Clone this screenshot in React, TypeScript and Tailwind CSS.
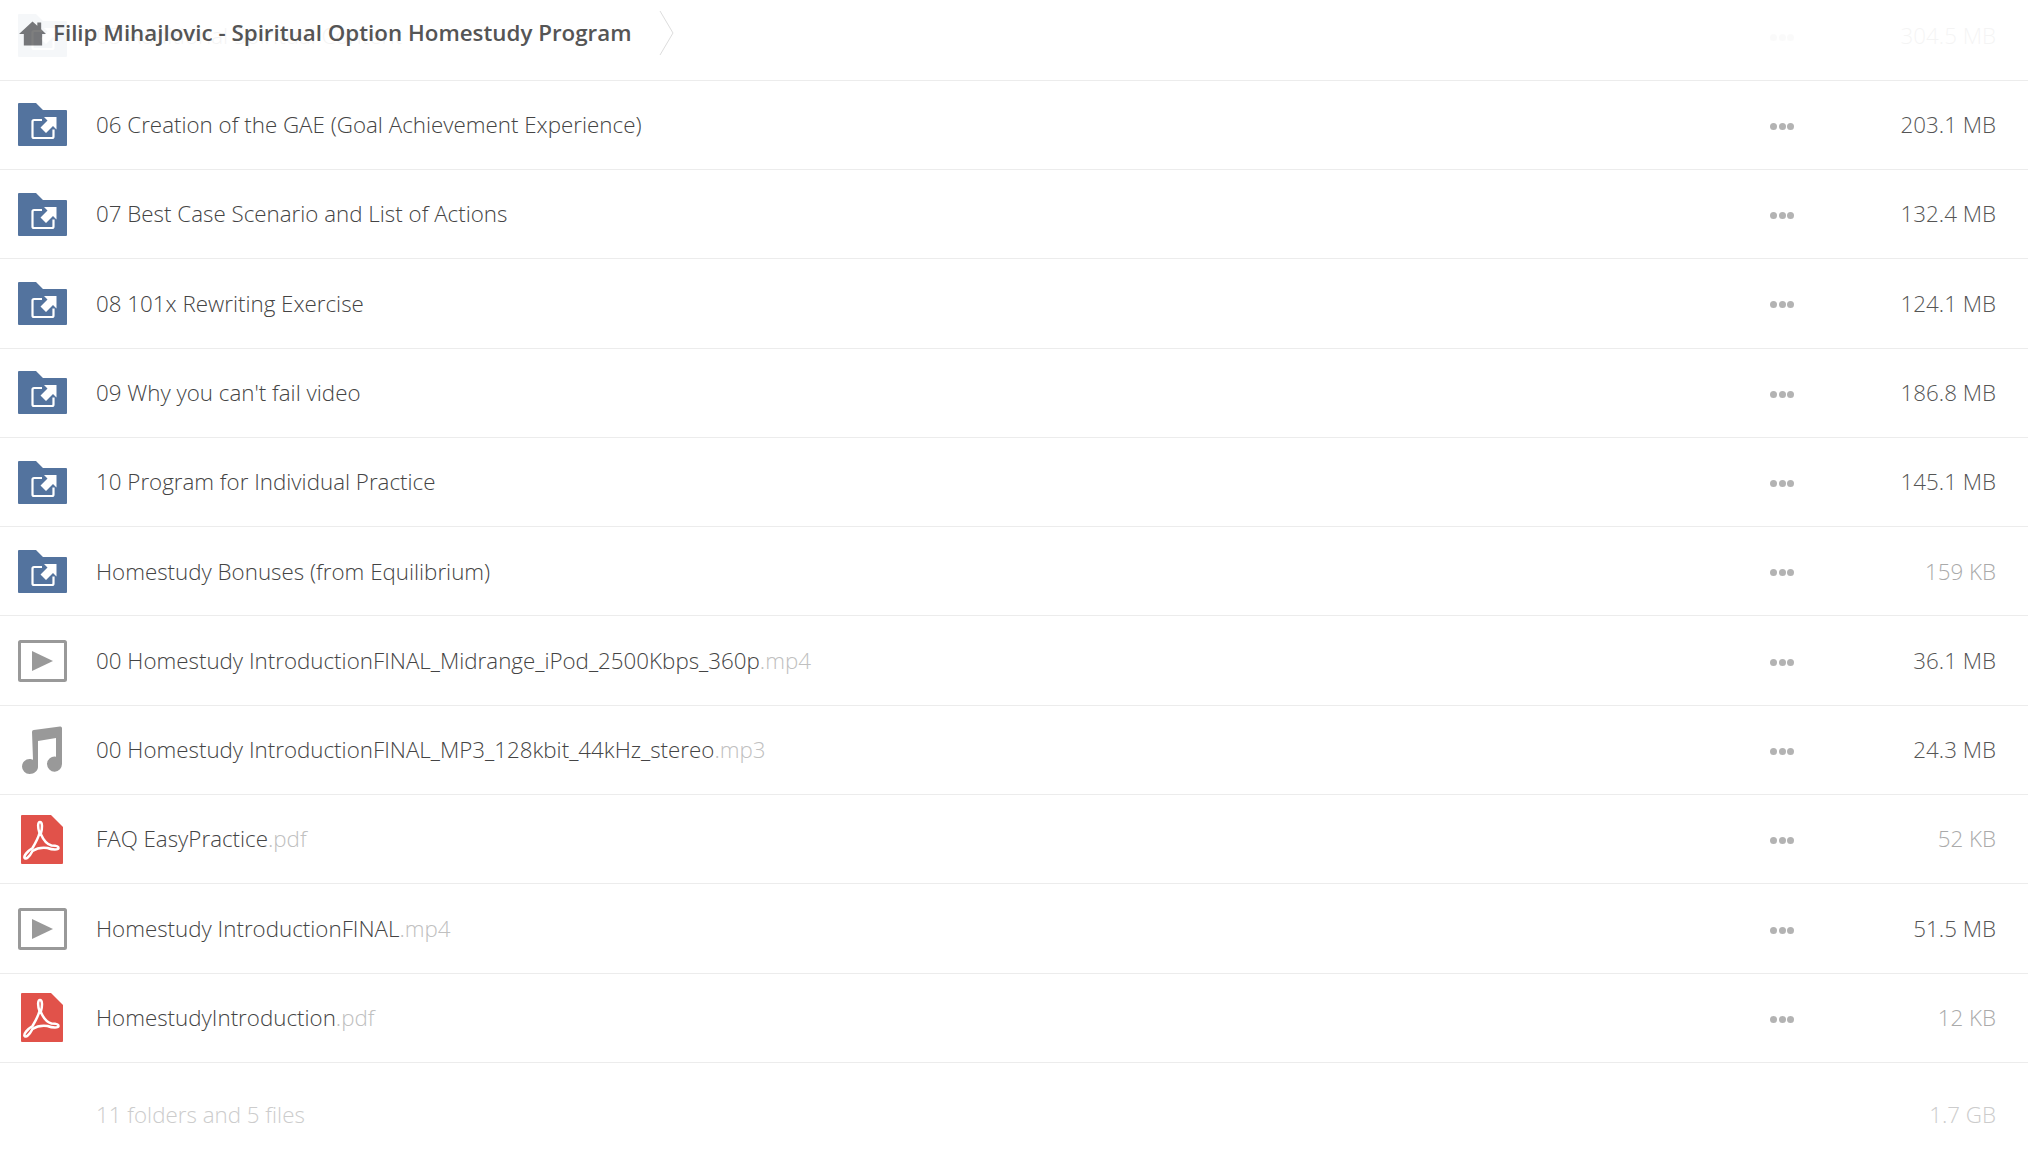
type FileKind = 'folder' | 'video' | 'audio' | 'pdf';

interface Item {
  name: string;
  ext?: string;
  size: string;
  kind: FileKind;
  small?: boolean;
}

const items: Item[] = [
  { name: '06 Creation of the GAE (Goal Achievement Experience)', size: '203.1 MB', kind: 'folder' },
  { name: '07 Best Case Scenario and List of Actions', size: '132.4 MB', kind: 'folder' },
  { name: '08 101x Rewriting Exercise', size: '124.1 MB', kind: 'folder' },
  { name: "09 Why you can't fail video", size: '186.8 MB', kind: 'folder' },
  { name: '10 Program for Individual Practice', size: '145.1 MB', kind: 'folder' },
  { name: 'Homestudy Bonuses (from Equilibrium)', size: '159 KB', kind: 'folder', small: true },
  { name: '00 Homestudy IntroductionFINAL_Midrange_iPod_2500Kbps_360p', ext: '.mp4', size: '36.1 MB', kind: 'video' },
  { name: '00 Homestudy IntroductionFINAL_MP3_128kbit_44kHz_stereo', ext: '.mp3', size: '24.3 MB', kind: 'audio' },
  { name: 'FAQ EasyPractice', ext: '.pdf', size: '52 KB', kind: 'pdf', small: true },
  { name: 'Homestudy IntroductionFINAL', ext: '.mp4', size: '51.5 MB', kind: 'video' },
  { name: 'HomestudyIntroduction', ext: '.pdf', size: '12 KB', kind: 'pdf', small: true },
];

const FolderIcon = () => (
  <svg width="49" height="43" viewBox="0 0 49 43">
    <path d="M0 1a1 1 0 0 1 1-1h17l7 7h23a1 1 0 0 1 1 1v34a1 1 0 0 1-1 1H1a1 1 0 0 1-1-1z" fill="#53739e" />
    <path d="M24 17h-8a1.500 1.500 0 0 0-1.500 1.500v15a1.500 1.500 0 0 0 1.500 1.500h18a1.500 1.500 0 0 0 1.500-1.500v-7" fill="none" stroke="#fff" strokeWidth="2.200" />
    <path d="M22.500 24.500l7-7-3.500-3.500h12.500v12.500l-3.500-3.500-7 7z" fill="#fff" />
  </svg>
);

const VideoIcon = () => (
  <svg width="49" height="42" viewBox="0 0 49 42">
    <rect x="1.500" y="1.500" width="46" height="39" rx="1" fill="none" stroke="#999" strokeWidth="3" />
    <path d="M14 11l21 10-21 10z" fill="#999" />
  </svg>
);

const AudioIcon = () => (
  <svg width="40" height="48" viewBox="0 0 40 48">
    <path d="M10 6a2 2 0 0 1 1.800-2L38 .5A1.700 1.700 0 0 1 40 2v35.500a7.500 8 0 0 1-15 .5 7.500 7.500 0 0 1 9-7.300V12l-18 3v26c0 3.500-3.500 7-8.500 7a7.500 7.500 0 0 1 0-15c1.200 0 2.600.2 3.500.7z" fill="#999" />
  </svg>
);

const PdfIcon = () => (
  <svg width="42" height="49" viewBox="0 0 42 49">
    <path d="M1 0h29l12 12v36a1 1 0 0 1-1 1H1a1 1 0 0 1-1-1V1a1 1 0 0 1 1-1z" fill="#e1524a" />
    <path d="M19 7c2.500 0 2.500 6 .8 12 3 7 6.700 10.500 10.700 11.500 4 0 7 .5 7 2.500s-6 2-11 0c-7-1-12 1-15 3-3 6-7 9-8 7s3-7 8-10c3-5 6-11 7-15-1.800-5-2-11.000.5-11z" fill="none" stroke="#fff" strokeWidth="2.500" strokeLinejoin="round" />
  </svg>
);

const icons: Record<FileKind, () => React.ReactElement> = {
  folder: FolderIcon,
  video: VideoIcon,
  audio: AudioIcon,
  pdf: PdfIcon,
};

const Dots = () => (
  <div className="flex gap-[1.500px] pt-[3px]">
    <span className="w-[7px] h-[7px] rounded-full bg-[#b3b3b3]" />
    <span className="w-[7px] h-[7px] rounded-full bg-[#b3b3b3]" />
    <span className="w-[7px] h-[7px] rounded-full bg-[#b3b3b3]" />
  </div>
);

function Row({ item }: { item: Item }) {
  const Icon = icons[item.kind];
  return (
    <div className="flex items-center h-[89.300px] pl-[17.500px] pr-[32px] border-b border-[#ececec]">
      <div className="w-[49px] flex justify-center shrink-0">
        <Icon />
      </div>
      <div className="ml-[29.500px] flex-1 text-[#444]">
        {item.name}
        {item.ext && <span className="text-[#c0c0c0]">{item.ext}</span>}
      </div>
      <Dots />
      <div className={`w-[202px] text-right ${item.small ? 'text-[#aaa]' : 'text-[#555]'}`}>{item.size}</div>
    </div>
  );
}

export default function App() {
  return (
    <div className="relative h-[1167px] overflow-hidden bg-white font-['Open_Sans',sans-serif] font-light text-[22.350px]">
      {/* Sticky breadcrumb over the row scrolled under it */}
      <div className="absolute top-0 left-0 flex items-center h-[65px] pl-[19px] text-[#555] font-semibold">
        <svg width="27" height="26" viewBox="0 0 28 26">
          <path d="M14 1l5 4.500V2h4v7l5 5h-4v12H5V14H0z" fill="#777" />
        </svg>
        <span className="ml-[7px]">Filip Mihajlovic - Spiritual Option Homestudy Program</span>
        <svg className="ml-[28px]" width="16" height="46" viewBox="0 0 16 46">
          <path d="M1 1l13 22L1 45" fill="none" stroke="#ddd" strokeWidth="1" />
        </svg>
      </div>

      <div className="-mt-[8.600px]">
        <div className="flex items-center h-[89.300px] pl-[17.500px] pr-[32px] border-b border-[#ececec]">
          <div className="flex items-center flex-1 opacity-5">
            <FolderIcon />
            <div className="ml-[29.500px] flex-1 text-[#333]">05 Additional Spiritual Content</div>
            <Dots />
            <div className="w-[202px] text-right text-[#444]">304.5 MB</div>
          </div>
        </div>
        {items.map((item) => (
          <Row key={item.name} item={item} />
        ))}
        <div className="flex items-center h-[103px] pl-[96px] pr-[32px] text-[#ccc]">
          <div className="flex-1">11 folders and 5 files</div>
          <div>1.7 GB</div>
        </div>
      </div>
    </div>
  );
}
